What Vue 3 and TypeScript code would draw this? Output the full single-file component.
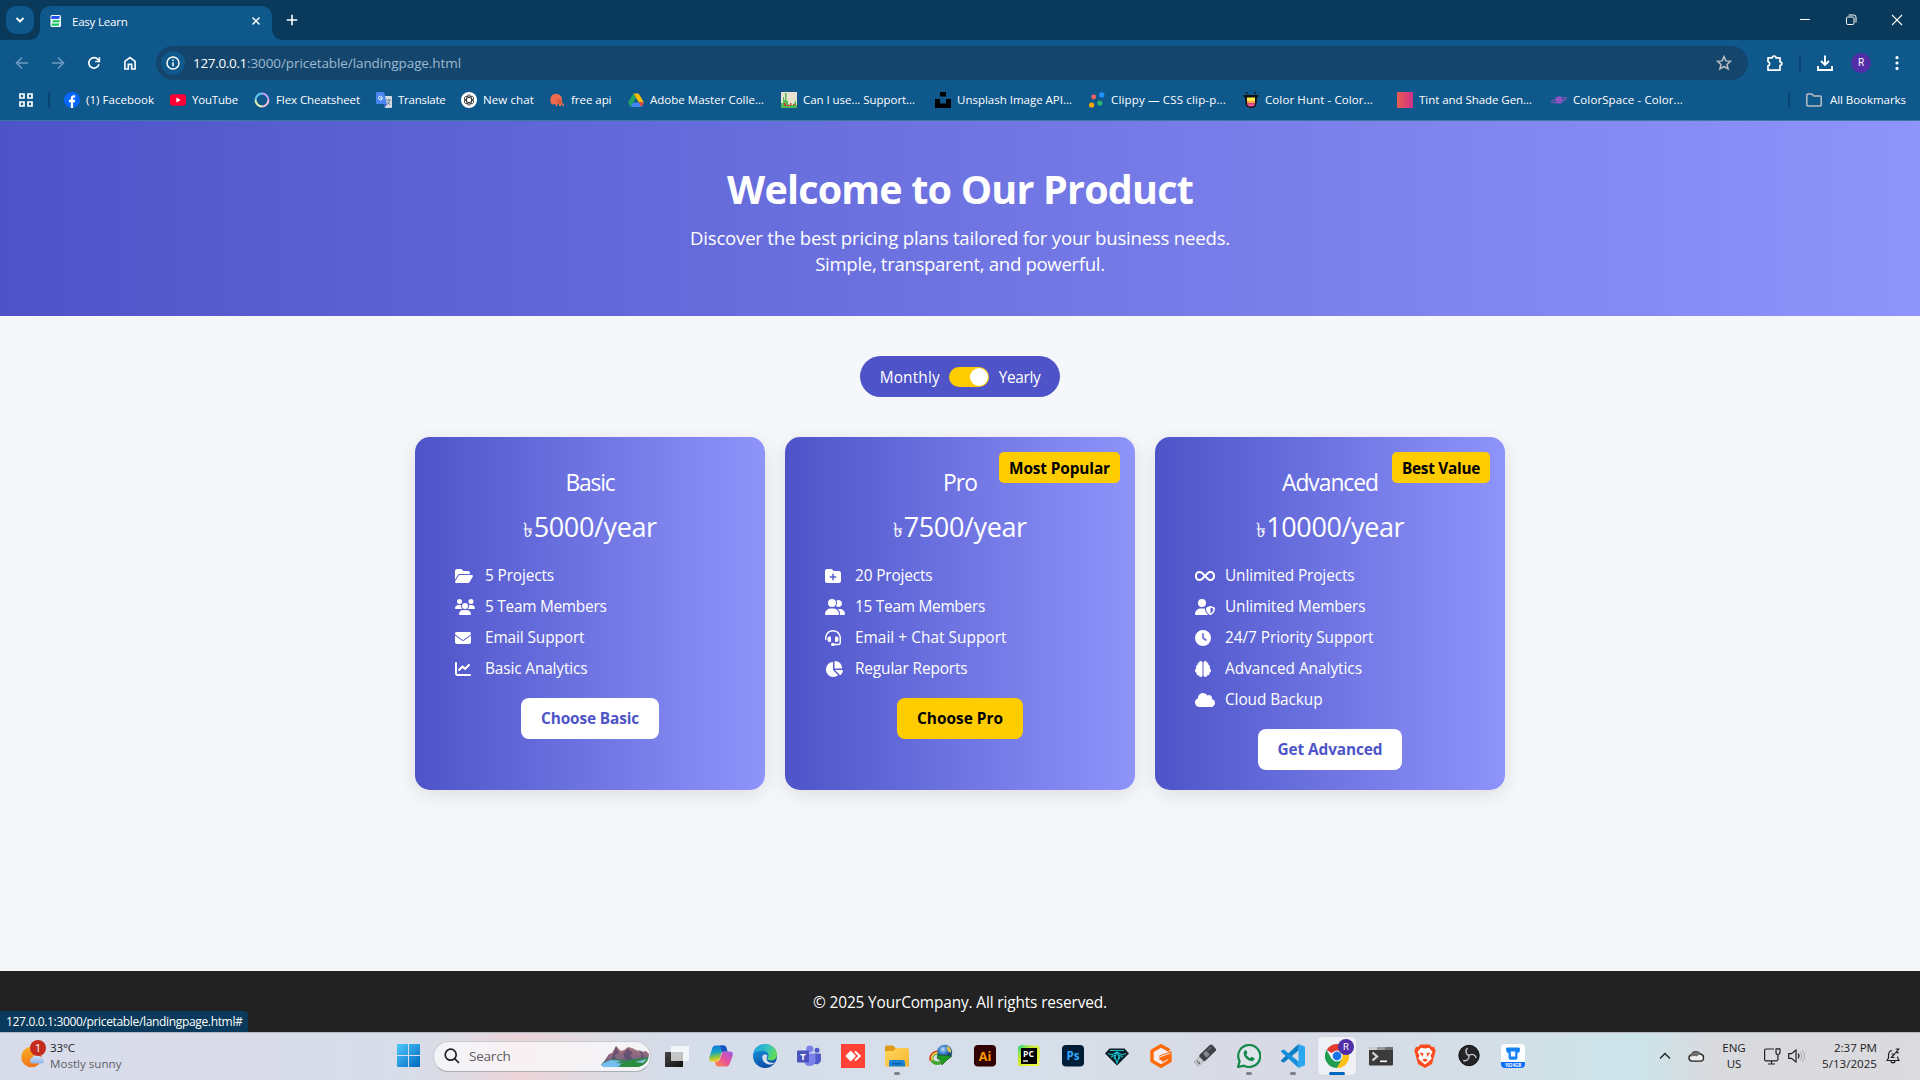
<script setup lang="ts">
import { ref } from 'vue'

interface Bookmark { label: string; icon: string; slot: number; text: number }
interface Feature { icon: string; label: string; width: number }
interface Plan {
  name: string
  nameWidth: number
  price: string
  priceWidth: number
  badge?: string
  badgeWidth?: number
  features: Feature[]
  action: string
  actionWidth: number
  buttonWidth: number
  accent?: boolean
}

const bookmarks: Bookmark[] = [
  { label: '(1) Facebook', icon: 'facebook', slot: 106, text: 68 },
  { label: 'YouTube', icon: 'youtube', slot: 84, text: 46 },
  { label: 'Flex Cheatsheet', icon: 'ring', slot: 122, text: 84 },
  { label: 'Translate', icon: 'translate', slot: 85, text: 47.5 },
  { label: 'New chat', icon: 'chat', slot: 88, text: 51 },
  { label: 'free api', icon: 'api', slot: 79, text: 40.5 },
  { label: 'Adobe Master Colle...', icon: 'drive', slot: 153, text: 114 },
  { label: 'Can I use... Support...', icon: 'caniuse', slot: 154, text: 112 },
  { label: 'Unsplash Image API...', icon: 'unsplash', slot: 154, text: 115 },
  { label: 'Clippy — CSS clip-p...', icon: 'clippy', slot: 154, text: 115 },
  { label: 'Color Hunt - Color...', icon: 'hunt', slot: 154, text: 108 },
  { label: 'Tint and Shade Gen...', icon: 'tint', slot: 154, text: 113 },
  { label: 'ColorSpace - Color...', icon: 'space', slot: 154, text: 110 },
]

const glyphs: Record<string, { w: number; d: string }> = {
  folderOpen: { w: 576, d: 'M88.7 223.8L0 375.8V96C0 60.7 28.7 32 64 32H181.5c17 0 33.3 6.7 45.3 18.7l26.5 26.5c12 12 28.3 18.7 45.3 18.7H416c35.3 0 64 28.7 64 64v32H144c-22.8 0-43.8 12.1-55.3 31.8zm27.6 16.1C122.1 230 132.6 224 144 224H544c11.5 0 22 6.1 27.7 16.1s5.7 22.2-.1 32.1l-112 192C453.9 474 443.4 480 432 480H32c-11.5 0-22-6.1-27.7-16.1s-5.7-22.2 .1-32.1l112-192z' },
  users: { w: 640, d: 'M144 0a80 80 0 1 1 0 160A80 80 0 1 1 144 0zM512 0a80 80 0 1 1 0 160A80 80 0 1 1 512 0zM0 298.7C0 239.8 47.8 192 106.7 192h42.7c15.9 0 31 3.5 44.6 9.7c-1.3 7.2-1.9 14.7-1.9 22.3c0 38.2 16.8 72.5 43.3 96c-.2 0-.4 0-.7 0H21.3C9.6 320 0 310.4 0 298.7zM405.3 320c-.2 0-.4 0-.7 0c26.6-23.5 43.3-57.8 43.3-96c0-7.6-.7-15-1.9-22.3c13.6-6.3 28.7-9.7 44.6-9.7h42.7C592.2 192 640 239.8 640 298.7c0 11.8-9.6 21.3-21.3 21.3H405.3zM224 224a96 96 0 1 1 192 0 96 96 0 1 1 -192 0zM128 485.3C128 411.7 187.7 352 261.3 352H378.7C452.3 352 512 411.7 512 485.3c0 14.7-11.9 26.7-26.7 26.7H154.7c-14.7 0-26.7-11.9-26.7-26.7z' },
  envelope: { w: 512, d: 'M48 64C21.5 64 0 85.5 0 112c0 15.1 7.1 29.3 19.2 38.4L236.8 313.6c11.4 8.5 27 8.5 38.4 0L492.8 150.4c12.1-9.1 19.2-23.3 19.2-38.4c0-26.5-21.5-48-48-48H48zM0 176V384c0 35.3 28.7 64 64 64H448c35.3 0 64-28.7 64-64V176L294.4 339.2c-22.8 17.1-54 17.1-76.8 0L0 176z' },
  chartLine: { w: 512, d: 'M64 64c0-17.7-14.3-32-32-32S0 46.3 0 64V400c0 44.2 35.8 80 80 80H480c17.7 0 32-14.3 32-32s-14.3-32-32-32H80c-8.8 0-16-7.2-16-16V64zm406.6 86.6c12.5-12.5 12.5-32.8 0-45.3s-32.8-12.5-45.3 0L320 210.7l-57.4-57.4c-12.5-12.5-32.8-12.5-45.3 0l-112 112c-12.5 12.5-12.5 32.8 0 45.3s32.8 12.5 45.3 0L240 221.3l57.4 57.4c12.5 12.5 32.8 12.5 45.3 0l128-128z' },
  folderPlus: { w: 512, d: 'M512 416c0 35.3-28.7 64-64 64H64c-35.3 0-64-28.7-64-64V96C0 60.7 28.7 32 64 32H192c20.1 0 39.1 9.5 51.2 25.6l19.2 25.6c6 8.1 15.5 12.8 25.6 12.8H448c35.3 0 64 28.7 64 64V416zM232 376c0 13.3 10.7 24 24 24s24-10.7 24-24V312h64c13.3 0 24-10.7 24-24s-10.7-24-24-24H280V200c0-13.3-10.7-24-24-24s-24 10.7-24 24v64H168c-13.3 0-24 10.7-24 24s10.7 24 24 24h64v64z' },
  userGroup: { w: 640, d: 'M96 128a128 128 0 1 1 256 0A128 128 0 1 1 96 128zM0 482.3C0 383.8 79.8 304 178.3 304h91.4C368.2 304 448 383.8 448 482.3c0 16.4-13.3 29.7-29.7 29.7H29.7C13.3 512 0 498.7 0 482.3zM609.3 512H471.4c5.4-9.4 8.6-20.3 8.6-32v-8c0-60.7-27.1-115.2-69.8-151.8c2.4-.1 4.7-.2 7.1-.2h61.4C567.8 320 640 392.2 640 481.3c0 17-13.8 30.7-30.7 30.7zM432 256c-31 0-59-12.6-79.3-32.9C372.4 196.5 384 163.6 384 128c0-26.8-6.6-52.1-18.3-74.3C384.3 40.1 407.2 32 432 32c61.9 0 112 50.1 112 112s-50.1 112-112 112z' },
  headset: { w: 512, d: 'M256 48C141.1 48 48 141.1 48 256v40c0 13.3-10.7 24-24 24s-24-10.7-24-24V256C0 114.6 114.6 0 256 0S512 114.6 512 256V400.1c0 48.6-39.4 88-88.1 88L313.6 488c-8.3 14.3-23.8 24-41.6 24H240c-26.5 0-48-21.5-48-48s21.5-48 48-48h32c17.8 0 33.3 9.7 41.6 24l110.4 .1c22.1 0 40-17.9 40-40V256c0-114.9-93.1-208-208-208zM144 208h16c17.7 0 32 14.3 32 32V352c0 17.7-14.3 32-32 32H144c-35.3 0-64-28.7-64-64V272c0-35.3 28.7-64 64-64zm224 0c35.3 0 64 28.7 64 64v48c0 35.3-28.7 64-64 64H352c-17.7 0-32-14.3-32-32V240c0-17.7 14.3-32 32-32h16z' },
  chartPie: { w: 576, d: 'M304 240V16.6c0-9 7-16.6 16-16.6C443.7 0 544 100.3 544 224c0 9-7.6 16-16.6 16H304zM32 272C32 150.7 122.1 50.3 239 34.3c9.2-1.3 17 6.1 17 15.4V288L412.5 444.5c6.7 6.7 6.2 17.7-1.5 23.1C371.8 495.6 323.8 512 272 512C139.5 512 32 404.6 32 272zm526.4 16c9.3 0 16.6 7.8 15.4 17c-7.7 55.9-34.6 105.6-73.9 142.3c-6 5.6-15.4 5.2-21.2-.7L320 288H558.4z' },
  infinity: { w: 640, d: 'M0 241.1C0 161 65 96 145.1 96c38.5 0 75.4 15.3 102.6 42.5L320 210.7l72.2-72.2C419.5 111.3 456.4 96 494.9 96C575 96 640 161 640 241.1v29.7C640 351 575 416 494.9 416c-38.5 0-75.4-15.3-102.6-42.5L320 301.3l-72.2 72.2C220.5 400.7 183.6 416 145.1 416C65 416 0 351 0 270.9V241.1zM274.7 256l-72.2-72.2c-15.2-15.2-35.9-23.8-57.4-23.8C100.3 160 64 196.3 64 241.1v29.7c0 44.8 36.3 81.1 81.1 81.1c21.5 0 42.2-8.5 57.4-23.8L274.7 256zm90.5 0l72.2 72.2c15.2 15.2 35.9 23.8 57.4 23.8c44.8 0 81.1-36.3 81.1-81.1V241.1c0-44.8-36.3-81.1-81.1-81.1c-21.5 0-42.2 8.5-57.4 23.8L365.3 256z' },
  userShield: { w: 640, d: 'M224 256A128 128 0 1 0 224 0a128 128 0 1 0 0 256zm-45.7 48C79.8 304 0 383.8 0 482.3C0 498.7 13.3 512 29.7 512H418.3c1.8 0 3.5-.2 5.3-.5c-76.3-55.1-99.8-141-103.1-200.2c-16.1-4.8-33.1-7.3-50.7-7.3H178.3zm308.8-78.3l-120 48C358 277.4 352 286.2 352 296c0 63.3 25.9 168.8 134.8 214.2c5.9 2.5 12.6 2.5 18.5 0C614.1 464.8 640 359.3 640 296c0-9.8-6-18.6-15.1-22.3l-120-48c-5.7-2.3-12.1-2.3-17.8 0zM591.4 312c-3.9 50.7-27.2 116.7-95.4 149.7V273.8L591.4 312z' },
  clock: { w: 512, d: 'M256 0a256 256 0 1 1 0 512A256 256 0 1 1 256 0zM232 120V256c0 8 4 15.5 10.7 20l96 64c11 7.4 25.9 4.4 33.3-6.7s4.4-25.9-6.7-33.3L280 243.2V120c0-13.3-10.7-24-24-24s-24 10.7-24 24z' },
  brain: { w: 512, d: 'M184 0c30.9 0 56 25.1 56 56V456c0 30.9-25.1 56-56 56c-28.9 0-52.7-21.9-55.7-50.1c-5.2 1.4-10.7 2.1-16.3 2.1c-35.3 0-64-28.7-64-64c0-7.4 1.3-14.6 3.6-21.2C21.4 367.4 0 338.2 0 304c0-31.9 18.7-59.5 45.8-72.3C37.1 220.8 32 207 32 192c0-30.7 21.6-56.3 50.4-62.6C80.8 123.9 80 118 80 112c0-29.9 20.6-55.1 48.3-62.1C131.3 21.9 155.1 0 184 0zM328 0c28.9 0 52.6 21.9 55.7 49.9c27.8 7 48.3 32.1 48.3 62.1c0 6-.8 11.9-2.4 17.4c28.8 6.2 50.4 31.9 50.4 62.6c0 15-5.1 28.8-13.8 39.7C493.3 244.5 512 272.1 512 304c0 34.2-21.4 63.4-51.6 74.8c2.3 6.6 3.6 13.8 3.6 21.2c0 35.3-28.7 64-64 64c-5.6 0-11.1-.7-16.3-2.1c-3 28.2-26.8 50.1-55.7 50.1c-30.9 0-56-25.1-56-56V56c0-30.9 25.1-56 56-56z' },
  cloud: { w: 640, d: 'M0 336c0 79.5 64.5 144 144 144H512c70.7 0 128-57.3 128-128c0-61.9-44-113.6-102.4-125.4c4.1-10.7 6.4-22.4 6.4-34.6c0-53-43-96-96-96c-19.7 0-38.1 6-53.3 16.2C367 64.2 315.3 32 256 32C167.6 32 96 103.6 96 192c0 2.7 .1 5.4 .2 8.1C40.2 219.8 0 273.2 0 336z' },
}

const plans: Plan[] = [
  {
    name: 'Basic', nameWidth: 49, price: '5000/year', priceWidth: 123,
    features: [
      { icon: 'folderOpen', label: '5 Projects', width: 69 },
      { icon: 'users', label: '5 Team Members', width: 121.5 },
      { icon: 'envelope', label: 'Email Support', width: 99.5 },
      { icon: 'chartLine', label: 'Basic Analytics', width: 102.5 },
    ],
    action: 'Choose Basic', actionWidth: 98, buttonWidth: 138,
  },
  {
    name: 'Pro', nameWidth: 34, price: '7500/year', priceWidth: 123,
    badge: 'Most Popular', badgeWidth: 101,
    features: [
      { icon: 'folderPlus', label: '20 Projects', width: 77.5 },
      { icon: 'userGroup', label: '15 Team Members', width: 130 },
      { icon: 'headset', label: 'Email + Chat Support', width: 151.5 },
      { icon: 'chartPie', label: 'Regular Reports', width: 112.5 },
    ],
    action: 'Choose Pro', actionWidth: 86, buttonWidth: 126, accent: true,
  },
  {
    name: 'Advanced', nameWidth: 96, price: '10000/year', priceWidth: 138,
    badge: 'Best Value', badgeWidth: 78,
    features: [
      { icon: 'infinity', label: 'Unlimited Projects', width: 129.5 },
      { icon: 'userShield', label: 'Unlimited Members', width: 140.5 },
      { icon: 'clock', label: '24/7 Priority Support', width: 148.5 },
      { icon: 'brain', label: 'Advanced Analytics', width: 137 },
      { icon: 'cloud', label: 'Cloud Backup', width: 97.5 },
    ],
    action: 'Get Advanced', actionWidth: 105, buttonWidth: 144,
  },
]

const yearly = ref(true)

// Tracks a text run so that it takes exactly the given width.
const vFit = {
  mounted(el: HTMLElement, binding: { value: number }) {
    const count = (el.textContent ?? '').trim().length
    const natural = el.getBoundingClientRect().width
    if (count > 0) el.style.letterSpacing = `${(binding.value - natural) / count}px`
  },
}
</script>

<template>
  <div class="screen">
    <header class="browser">
      <div class="tabstrip">
        <button class="tab-search" aria-label="Search tabs">
          <svg width="10" height="10" viewBox="0 0 10 10" fill="none" stroke="#fff" stroke-width="1.8"><path d="M1.5 3L5 6.5 8.5 3" /></svg>
        </button>
        <div class="tab">
          <svg class="favicon" width="12" height="12" viewBox="0 0 12 12">
            <rect x=".5" width="10.5" height="12" rx="1.5" fill="#f4fbff" />
            <path d="M1.500 1h8.500l-.8 3H1.200z" fill="#2b50f0" />
            <path d="M3 5.200h7l-.8 2H2z" fill="#0fc45c" />
            <path d="M2 8.500h7.500l-.8 2.300H1.500z" fill="#0fc45c" />
          </svg>
          <span v-fit="55.500" class="fit">Easy Learn</span>
          <svg class="tab-close" width="10" height="10" viewBox="0 0 10 10" stroke="#fff" stroke-width="1.5"><path d="M1.500 1.500l7 7M8.500 1.500l-7 7" /></svg>
        </div>
        <svg class="new-tab" width="12" height="12" viewBox="0 0 12 12" stroke="#fff" stroke-width="1.600"><path d="M6 .8v10.400M.8 6h10.400" /></svg>
        <div class="window-buttons">
          <svg width="12" height="12" viewBox="0 0 12 12" stroke="#fff"><path d="M1 5.500h10" /></svg>
          <svg width="12" height="12" viewBox="0 0 12 12" fill="none" stroke="#fff"><rect x="1.500" y="3" width="7.500" height="7.500" rx="1.200" /><path d="M3.500 1h5.200A2.300 2.300 0 0 1 11 3.300v5.200" /></svg>
          <svg width="12" height="12" viewBox="0 0 12 12" stroke="#fff" stroke-width="1.100"><path d="M1 1l10 10M11 1L1 11" /></svg>
        </div>
      </div>

      <div class="toolbar">
        <div class="nav-buttons">
          <svg width="14" height="14" viewBox="0 0 14 14" fill="none" stroke="#6f9cc0" stroke-width="1.6"><path d="M13 7H2M7 1.5L1.5 7 7 12.5" /></svg>
          <svg width="14" height="14" viewBox="0 0 14 14" fill="none" stroke="#6f9cc0" stroke-width="1.6"><path d="M1 7h11M7 1.5L12.5 7 7 12.5" /></svg>
          <svg width="14" height="14" viewBox="0 0 14 14" fill="none" stroke="#fff" stroke-width="1.6"><path d="M12 8.3A5.2 5.2 0 1 1 10.9 3.4L12.3 5" /><path d="M12.400 1.200v4.300H8.200" /></svg>
          <svg width="14" height="14" viewBox="0 0 14 14" fill="none" stroke="#fff" stroke-width="1.6"><path d="M1.9 13V5.400L7 1.500l5.100 3.900V13H8.700V8.400H5.300V13z" /></svg>
        </div>
        <div class="omnibox">
          <span class="site-info">
            <svg width="14" height="14" viewBox="0 0 14 14" fill="none" stroke="#fff" stroke-width="1.5"><circle cx="7" cy="7" r="6" /><path d="M7 6.200v4M7 3.500v1.500" /></svg>
          </span>
          <span v-fit="54" class="fit host">127.0.0.1</span><span v-fit="214" class="fit path">:3000/pricetable/landingpage.html</span>
          <svg class="star" width="16" height="16" viewBox="0 0 16 16" fill="none" stroke="#b9bcc0" stroke-width="1.5"><path d="M8 1.600l1.900 4.300 4.600.4-3.500 3.100 1.100 4.600L8 11.500 3.900 14 5 9.400 1.500 6.300l4.600-.4z" /></svg>
        </div>
        <svg class="puzzle" width="18" height="18" viewBox="0 0 18 18" fill="none" stroke="#fff" stroke-width="1.700" stroke-linejoin="round"><path d="M2 3.800h4.300a1.800 1.800 0 0 1 3.600 0H14v4a1.800 1.800 0 0 1 0 3.600v4.800H2v-4.300a2.200 2.200 0 0 0 0-4.300z" /></svg>
        <i class="divider"></i>
        <svg class="download" width="16" height="16" viewBox="0 0 16 16" fill="none" stroke="#fff" stroke-width="1.900"><path d="M8 .5v9M4 6l4 4 4-4M1 11v4h14v-4" /></svg>
        <span class="avatar">R</span>
        <svg width="4" height="16" viewBox="0 0 4 16" fill="#fff"><circle cx="2" cy="2.600" r="1.600" /><circle cx="2" cy="8" r="1.600" /><circle cx="2" cy="13.400" r="1.600" /></svg>
      </div>

      <div class="bookmarks">
        <svg width="14" height="14" viewBox="0 0 14 14" fill="none" stroke="#fff" stroke-width="1.700"><path d="M1 1h4v4H1zM9 1h4v4H9zM1 9h4v4H1zM9 9h4v4H9z" /></svg>
        <i class="divider first"></i>
        <div v-for="b in bookmarks" :key="b.label" class="bookmark" :style="{ width: b.slot + 'px' }">
          <svg width="16" height="16" viewBox="0 0 16 16">
            <g v-if="b.icon === 'facebook'"><circle cx="8" cy="8" r="8" fill="#0866ff" /><path d="M6.800 16V10.200H4.900V7.800h1.900V6.400c0-2.200 1.100-3.200 2.900-3.200.7 0 1.200.1 1.500.2v2h-.9c-1 0-1.200.4-1.200 1.200v1.200h2.100l-.4 2.400H9.100V16z" fill="#fff" /></g>
            <g v-else-if="b.icon === 'youtube'"><rect y="2.300" width="16" height="11.400" rx="2.600" fill="#ff0033" /><path d="M6.400 5.600v4.800L10.600 8z" fill="#fff" /></g>
            <g v-else-if="b.icon === 'ring'" fill="none" stroke-width="2"><path d="M1.600 8A6.400 6.400 0 0 1 8 1.600" stroke="#64c9f1" /><path d="M8 1.600A6.400 6.400 0 0 1 14.400 8" stroke="#c29bf3" /><path d="M14.400 8A6.400 6.400 0 0 1 8 14.400" stroke="#f0bde0" /><path d="M8 14.400A6.400 6.400 0 0 1 1.600 8" stroke="#e9efb5" /></g>
            <g v-else-if="b.icon === 'translate'"><path d="M6 4h9a1 1 0 0 1 1 1v10a1 1 0 0 1-1 1H9z" fill="#d5dae2" /><path d="M1 0h7l3 12H1a1 1 0 0 1-1-1V1a1 1 0 0 1 1-1z" fill="#4a86f0" /><path d="M7.200 5.900H5v1.100h1.100A1.900 1.900 0 1 1 5.700 4.600" stroke="#fff" stroke-width=".9" fill="none" /><path d="M10.300 8h4.500M12.500 7v1M11 12.500c1.700-1 2.500-2.500 2.700-4.500M11.500 9.500l2.500 3.500" stroke="#68778a" stroke-width=".9" fill="none" /><path d="M8.500 16l2.500-4H8z" fill="#3056c8" /></g>
            <g v-else-if="b.icon === 'chat'"><circle cx="8" cy="8" r="8" fill="#fff" /><g fill="none" stroke="#222" stroke-width=".8"><ellipse cx="8" cy="8" rx="2.500" ry="5.200" /><ellipse cx="8" cy="8" rx="2.500" ry="5.200" transform="rotate(60 8 8)" /><ellipse cx="8" cy="8" rx="2.500" ry="5.200" transform="rotate(120 8 8)" /></g></g>
            <g v-else-if="b.icon === 'api'" fill="#ee6c4d"><path d="M1.800 11C.3 6 2.500 1.800 7 1.800S14 6 13 11l2 1v2h-1.500v-1.500H12V14h-2v-2H8.500v2h-2v-2H5l-1.500.8z" /><path d="M8 7h4.500v5H8z" fill="#c94c35" opacity=".5" /></g>
            <g v-else-if="b.icon === 'drive'"><path d="M5.400 1.500h5.200L16 10.500h-5.200z" fill="#fbbc04" /><path d="M5.400 1.500L8 6 2.600 15 0 10.500z" fill="#1ea362" /><path d="M5.300 10.500H16L13.400 15H2.600z" fill="#4285f4" /><path d="M10.800 10.500H16L13.400 15z" fill="#ea4335" /></g>
            <g v-else-if="b.icon === 'caniuse'"><rect width="16" height="16" fill="#e9e1cf" /><path d="M0 16v-5h2V5h1v3h1V1h1.500v8H7v3h1v1h5v-2h1v-2h1v4h1v3z" fill="#52b755" /><path d="M3 11h2v2h5v1H3zM9 11h1.500v2H9zM12 12h3v1h-3z" fill="#c8503e" /></g>
            <path v-else-if="b.icon === 'unsplash'" d="M5 0h6v4.500H5zM0 7h5v4.500h6V7h5v9H0z" fill="#000" />
            <g v-else-if="b.icon === 'clippy'"><circle cx="4.700" cy="5" r="2.400" fill="#f5625d" /><circle cx="12.800" cy="2.900" r="2.600" fill="#1e90ff" /><circle cx="2.600" cy="13" r="2.600" fill="#ffa502" /><circle cx="10.800" cy="11" r="2.600" fill="#2fb573" /></g>
            <g v-else-if="b.icon === 'hunt'"><path d="M0 3.800l2-.8h12l2 .8-2 2H2z" fill="#111" /><path d="M2.300 4h11.400v6.500a5.700 5.500 0 0 1-11.400 0z" fill="#111" /><path d="M4 5.500h8v3.500H4z" fill="#fff04d" /><path d="M4 8.800h8v2.400H4z" fill="#ffa64d" /><path d="M4 11.200h8a4 3.400 0 0 1-8 0z" fill="#f0529c" /><path d="M3 .3l1.500 1M13 .3l-1.500 1" stroke="#111" stroke-width="1.400" /></g>
            <g v-else-if="b.icon === 'tint'"><defs><linearGradient id="tint"><stop stop-color="#e85d4e" /><stop offset="1" stop-color="#d1308a" /></linearGradient></defs><rect width="16" height="16" fill="url(#tint)" /></g>
            <g v-else><circle cx="8" cy="8" r="3.700" fill="#8d55c7" /><path d="M4.500 7.500C2 8 .5 9 .7 9.900c.3 1.200 5 .9 9-.3S16 6.600 15.300 6c-.4-.5-1.800-.6-3.500-.3" fill="none" stroke="#8058b8" stroke-width="1.200" /></g>
          </svg>
          <span v-fit="b.text" class="fit">{{ b.label }}</span>
        </div>
        <div class="all-bookmarks">
          <i class="divider"></i>
          <svg width="16" height="14" viewBox="0 0 16 14" fill="none" stroke="#b9bcc0" stroke-width="1.500"><path d="M.8 12V2a1 1 0 0 1 1-1h4l2 2h6.400a1 1 0 0 1 1 1v8a1 1 0 0 1-1 1H1.800a1 1 0 0 1-1-1z" /></svg>
          <span v-fit="76" class="fit">All Bookmarks</span>
        </div>
      </div>
    </header>

    <section class="hero">
      <h1><span v-fit="466" class="fit">Welcome to Our Product</span></h1>
      <p><span v-fit="540" class="fit">Discover the best pricing plans tailored for your business needs.</span></p>
      <p><span v-fit="289.500" class="fit">Simple, transparent, and powerful.</span></p>
    </section>

    <main class="pricing">
      <div class="billing">
        <span v-fit="60" class="fit">Monthly</span>
        <button class="switch" :class="{ on: yearly }" aria-label="Billing period" @click="yearly = !yearly"><i></i></button>
        <span v-fit="41.500" class="fit">Yearly</span>
      </div>

      <div class="plans">
        <article v-for="plan in plans" :key="plan.name" class="plan">
          <span v-if="plan.badge" class="badge"><span v-fit="plan.badgeWidth" class="fit">{{ plan.badge }}</span></span>
          <h2><span v-fit="plan.nameWidth" class="fit">{{ plan.name }}</span></h2>
          <p class="price"><span class="taka">৳</span><span v-fit="plan.priceWidth" class="fit">{{ plan.price }}</span></p>
          <ul>
            <li v-for="f in plan.features" :key="f.label">
              <span class="mark"><svg :width="glyphs[f.icon].w / 32" height="16" :viewBox="`0 0 ${glyphs[f.icon].w} 512`" fill="#fff"><path :d="glyphs[f.icon].d" /></svg></span>
              <span v-fit="f.width" class="fit">{{ f.label }}</span>
            </li>
          </ul>
          <a class="action" :class="{ accent: plan.accent }" :style="{ width: plan.buttonWidth + 'px' }"><span v-fit="plan.actionWidth" class="fit">{{ plan.action }}</span></a>
        </article>
      </div>
    </main>

    <footer class="footer">
      <span v-fit="294" class="fit">© 2025 YourCompany. All rights reserved.</span>
      <span class="status"><span v-fit="236.500" class="fit">127.0.0.1:3000/pricetable/landingpage.html#</span></span>
    </footer>

    <div class="taskbar">
      <div class="weather">
        <svg width="26" height="28" viewBox="0 0 26 28">
          <defs>
            <linearGradient id="sun" x1="0" y1="0" x2=".3" y2="1"><stop stop-color="#f7b62a" /><stop offset="1" stop-color="#f07414" /></linearGradient>
            <linearGradient id="puff" x1="0" y1="0" x2="0" y2="1"><stop stop-color="#d9e8fb" /><stop offset="1" stop-color="#8fb4ee" /></linearGradient>
          </defs>
          <circle cx="10.500" cy="17" r="10.300" fill="url(#sun)" />
          <path d="M11 23.500a3 3 0 0 1 .3-5.800 4.500 4.500 0 0 1 8-1 3 3 0 0 1 3 3.800 2 2 0 0 1-1 3z" fill="url(#puff)" />
          <circle cx="17" cy="8" r="8" fill="#c42b1c" />
          <text x="17" y="12.200" text-anchor="middle" font-size="11.500" fill="#fff">1</text>
        </svg>
        <div class="weather-text"><span v-fit="25" class="fit">33°C</span><span v-fit="71.500" class="fit muted">Mostly sunny</span></div>
      </div>

      <svg class="start" width="24" height="24" viewBox="0 0 24 24">
        <defs><linearGradient id="win" x1="0" y1="0" x2="1" y2="1"><stop stop-color="#4cc9fa" /><stop offset="1" stop-color="#0067c0" /></linearGradient></defs>
        <path d="M1 0h10v11H0V1a1 1 0 0 1 1-1zM12 0h10a1 1 0 0 1 1 1v10H12zM0 12h11v11H1a1 1 0 0 1-1-1zM12 12h11v10a1 1 0 0 1-1 1H12z" fill="url(#win)" />
      </svg>

      <div class="search">
        <svg width="16" height="16" viewBox="0 0 16 16" fill="none" stroke="#222" stroke-width="1.700"><circle cx="6.700" cy="6.700" r="5.500" /><path d="M10.700 10.700l4.300 4.300" /></svg>
        <span v-fit="41.500" class="fit">Search</span>
        <svg class="scene" width="48" height="22" viewBox="0 0 48 22">
          <defs><clipPath id="sceneclip"><path d="M0 20C5 12 10 4 16 0h32v9a13 13 0 0 1-12 13H3z" /></clipPath><linearGradient id="hill" x1="0" y1="0" x2="0" y2="1"><stop stop-color="#b47878" /><stop offset="1" stop-color="#655b85" /></linearGradient></defs>
          <g clip-path="url(#sceneclip)">
            <path d="M2 18L8 9l3-1 4-7 5 5 3-1 4-3 4 1 4 2 5 2 5-1 5 5v9H0z" fill="url(#hill)" />
            <path d="M15 1l3 7-4 2 1 6-6 2zM27 3l5 5-3 3 4 4h-8l-3-6zM37 5l4 5-2 5h5l-3-9z" fill="#4d456f" opacity=".65" />
            <path d="M0 18l12-4 14 1 22-3v10H0z" fill="#38835a" />
            <path d="M0 19l10-4 10 1-5 2 11 1-10 3H0z" fill="#76bdf0" />
            <path d="M20 19l12-4 16-1v8H18z" fill="#2b8c3c" />
            <path d="M34 17l12-3-4 4z" fill="#8ac3e8" />
          </g>
        </svg>
      </div>

      <div class="apps">
        <div class="app"><svg width="24" height="24" viewBox="0 0 24 24"><defs><linearGradient id="tv" x1="0" y1="0" x2="1" y2="1"><stop stop-color="#454545" /><stop offset="1" stop-color="#111" /></linearGradient></defs><rect y="8" width="18" height="15" rx=".5" fill="url(#tv)" /><rect x="6" y="2" width="18" height="15" rx=".5" fill="#fff" opacity=".72" /></svg></div>

        <div class="app"><svg width="24" height="24" viewBox="0 0 24 24"><defs>
          <linearGradient id="cp1" x1="0" y1="0" x2=".2" y2="1"><stop stop-color="#1672d8" /><stop offset=".45" stop-color="#12a4c9" /><stop offset=".75" stop-color="#8cc63e" /><stop offset="1" stop-color="#ffce2e" /></linearGradient>
          <linearGradient id="cp2" x1="1" y1="0" x2="0" y2="1"><stop stop-color="#9b57e8" /><stop offset=".5" stop-color="#e8529a" /><stop offset="1" stop-color="#ff8b3d" /></linearGradient></defs>
          <path d="M6.500 1.500h8c2 0 2.600 1.200 3.100 3l.9 3h-3.300c-1.800 0-2.600 1-3.100 2.600l-1.800 5.400c-.5 1.600-1.300 2.200-2.800 2.200H3c-2.500 0-3.300-2-2.500-4.700L3 5c.7-2.300 1.600-3.500 3.500-3.500z" fill="url(#cp1)" />
          <path d="M11 1.500h3.500c2 0 2.600 1.200 3.100 3l.9 3h-3.300c-.8 0-1.500.3-2 .8z" fill="#1b4fc4" />
          <path d="M17.500 22.500h-8c-2 0-2.600-1.200-3.100-3l-.5-1.800h2c1.800 0 2.600-1 3.100-2.600l1.700-5.400c.5-1.600 1.400-2.200 2.900-2.200H21c2.500 0 3.300 2 2.500 4.700L21 19c-.7 2.300-1.600 3.500-3.500 3.500z" fill="url(#cp2)" /></svg></div>

        <div class="app"><svg width="24" height="24" viewBox="0 0 24 24"><defs>
          <linearGradient id="eg1" x1="0" y1="0" x2="1" y2=".3"><stop stop-color="#1b9de2" /><stop offset=".6" stop-color="#35c1c4" /><stop offset="1" stop-color="#5fdc5a" /></linearGradient>
          <linearGradient id="eg2" x1="0" y1="0" x2=".4" y2="1"><stop stop-color="#1aa2e8" /><stop offset="1" stop-color="#0b4da8" /></linearGradient></defs>
          <circle cx="12" cy="12" r="12" fill="url(#eg2)" />
          <path d="M.4 9.500C1.700 4 6.400 0 12 0c6.800 0 12 5 12 10.800 0 3.500-2.600 5.600-5.800 5.600-2.600 0-4-1-4-1.800s1.200-1.200 1.200-3.300C15.400 8.500 12.500 6.800 9 6.800 5 6.800 2 8 .4 9.500z" fill="url(#eg1)" />
          <path d="M9.300 12.500c-.5 5 4 8.600 8.500 8 1.800-.2 3.500-1.200 4.400-2.200-3.500 1.300-8.600.5-8.600-4 0-1.300.8-2 .8-3-2-1.300-4.900-.8-5.100 1.200z" fill="#d5dfec" /></svg></div>

        <div class="app"><svg width="24" height="24" viewBox="0 0 24 24"><circle cx="12.800" cy="5" r="3.600" fill="#7b83eb" /><circle cx="20" cy="6.200" r="2.500" fill="#5059c9" /><path d="M17 9.500h6a1 1 0 0 1 1 1V16a4.500 4.500 0 0 1-7 3.500z" fill="#5059c9" /><path d="M8 9.500h9.500a1 1 0 0 1 1 1V17a5.800 5.800 0 0 1-11.500 0v-6.500a1 1 0 0 1 1-1z" fill="#7b83eb" /><rect y="6.500" width="12" height="12" rx="1" fill="#4b53bc" /><text x="6" y="16" text-anchor="middle" font-size="9.500" font-weight="700" fill="#fff">T</text></svg></div>

        <div class="app"><svg width="24" height="24" viewBox="0 0 24 24"><rect width="24" height="24" fill="#ff4136" /><path d="M9.700 6.500l5.300 5.500-5.300 5.500L4.300 12z" fill="#fff" /><path d="M14 7.500l4.700 4.500-4.700 4.500" fill="none" stroke="#fff" stroke-width="2" /></svg></div>

        <div class="app open"><svg width="24" height="24" viewBox="0 0 24 24"><defs><linearGradient id="fld" x1="0" y1="0" x2="1" y2="1"><stop stop-color="#ffd75e" /><stop offset="1" stop-color="#f7b52e" /></linearGradient></defs><path d="M0 3a1.500 1.500 0 0 1 1.500-1.500H8l2.500 2.500H22v6H0z" fill="#dd9a16" /><path d="M0 7h8l3-3h11.500A1.500 1.500 0 0 1 24 5.500v16a1 1 0 0 1-1 1H1a1 1 0 0 1-1-1z" fill="url(#fld)" /><path d="M4 22.500V18a2 2 0 0 1 2-2h12a2 2 0 0 1 2 2v4.500z" fill="#1782d6" /><path d="M7 19h10v1.500H7z" fill="#0c5ba5" /></svg></div>

        <div class="app"><svg width="24" height="24" viewBox="0 0 24 24"><defs><radialGradient id="idm" cx=".4" cy=".3"><stop stop-color="#c5e0f8" /><stop offset=".5" stop-color="#4488d0" /><stop offset="1" stop-color="#174a88" /></radialGradient></defs><circle cx="15.500" cy="8.500" r="7.700" fill="url(#idm)" /><path d="M18 2c3 1 4.500 4 4 7-3-1-5-4-4-7z" fill="#d9c44c" /><path d="M8 7C2 8.500-.5 13 1.500 17s7 5 11 3l-1-3c-3 1-6 .5-7-1.500S5 11 9 10z" fill="#42a52c" /><path d="M1.500 17C0 13 2 8.500 8 7" fill="none" stroke="#e23f31" stroke-width="1.500" /><path d="M3.300 16.500C1.500 13 4 9.300 8.500 8.500" fill="none" stroke="#f3d73b" stroke-width="1.500" /><path d="M9 11l14 1-4 3-6 6-1-4-4-3z" fill="#1d9b20" stroke="#175016" stroke-width=".6" /></svg></div>

        <div class="app"><svg width="24" height="24" viewBox="0 0 24 24"><rect x="1" y="1" width="22" height="21.500" rx="4" fill="#330000" /><text x="12" y="16.500" text-anchor="middle" font-size="12.500" font-weight="700" fill="#ff9a00">Ai</text></svg></div>

        <div class="app"><svg width="24" height="24" viewBox="0 0 24 24"><defs><linearGradient id="pcg" x1="0" y1="0" x2="1" y2="1"><stop stop-color="#21d789" /><stop offset=".35" stop-color="#c5e72a" /><stop offset="1" stop-color="#fcf84a" /></linearGradient></defs><path d="M1 3l3-2 18 1 1 8-1 12H1z" fill="url(#pcg)" /><rect x="4" y="4" width="16" height="16" fill="#000" /><text x="11.500" y="12.500" text-anchor="middle" font-size="8.500" font-weight="700" fill="#fff">PC</text><path d="M6 17h5" stroke="#fff" stroke-width="1.300" /></svg></div>

        <div class="app"><svg width="24" height="24" viewBox="0 0 24 24"><rect x="1" y="1" width="22" height="21.500" rx="4" fill="#001e36" /><text x="12" y="16" text-anchor="middle" font-size="11.500" font-weight="700" fill="#31a8ff">Ps</text></svg></div>

        <div class="app"><svg width="24" height="24" viewBox="0 0 24 24"><path d="M4.500 4.500h15L24 9.500l-12 12-12-12z" fill="#0b1d24" /><path d="M5 6.500h14M3 9.500l4 1.500 5-3 5 3 4-1.500M6 13l3.500-1.500L12 19l2.500-7.500L18 13M9 15l3-7 3 7" fill="none" stroke="#19c0cf" stroke-width="1.100" /></svg></div>

        <div class="app"><svg width="24" height="24" viewBox="0 0 24 24"><path d="M12 2l9 5v10l-9 5-9-5V7z" fill="#f3eef0" /><path d="M20.500 6.500L12 1.800 3 7v10l9 5.200 9-5.200v-4.500l-8.500 4" fill="none" stroke="#ff6a0a" stroke-width="3.400" stroke-linejoin="round" /><path d="M10.500 11.500L22.500 7v5l-12 4.500z" fill="#ff6a0a" /><path d="M11 12.800l10-3.600" stroke="#f3eef0" stroke-width="1" /></svg></div>

        <div class="app"><svg width="24" height="24" viewBox="0 0 24 24"><g transform="rotate(-44 12 12) translate(1 1) scale(.92)"><rect x="7" y="7" width="19" height="9" rx="2" fill="#3d4146" /><rect x="12" y="8.500" width="5" height="6" rx="1" fill="#85898e" /><rect x="18" y="8.500" width="6" height="2.500" rx="1" fill="#5a5e63" /><rect x="-1" y="8.500" width="8" height="6.500" fill="#c9ccd0" stroke="#777" stroke-width=".5" /><path d="M1 10h2v1.200H1zM1 12.500h2v1.200H1z" fill="#444" /></g></svg></div>

        <div class="app open"><svg width="24" height="24" viewBox="0 0 24 24"><path d="M1 23l1.600-5.800A11 11 0 1 1 7 21.600z" fill="#e7edf3" fill-opacity=".5" stroke="#168a4c" stroke-width="2.200" stroke-linejoin="round" /><path d="M8.200 6.200c.5-.2 1 0 1.200.4l.9 2.100c.1.300 0 .6-.2.900l-.8 1c.8 1.600 2.100 2.800 3.900 3.600l1-1.100c.2-.3.500-.3.800-.2l2.200 1c.4.200.5.5.4.900-.3 1.500-1.800 2.500-3.300 2.300-4-.7-7.300-3.900-7.700-7.600-.1-1.400.6-2.700 1.600-3.300z" fill="#168a4c" /></svg></div>

        <div class="app open"><svg width="24" height="24" viewBox="0 0 24 24"><path d="M17.500 0L24 2.800v18.400L17.500 24z" fill="#2aa7ee" /><path d="M17.500 0v6.500L3 18.500l-1 .1L0 17V16.300z" fill="#0b7cc4" /><path d="M17.500 24v-6.500L3 5.500l-1-.1L0 7v.7z" fill="#1590dc" /></svg></div>

        <div class="app active"><svg width="24" height="24" viewBox="0 0 24 24"><path d="M12 12L1.600 6A12 12 0 0 1 22.400 6z" fill="#e33b2e" /><path d="M12 12l10.400-6A12 12 0 0 1 12 24z" fill="#fbc116" /><path d="M12 12L6.800 15 1.600 6A12 12 0 0 0 12 24l5.200-9z" fill="#209d4f" /><path d="M12 6.500h10.600A12 12 0 0 1 12 24l5-9z" fill="#fbc116" /><circle cx="12" cy="12" r="5.600" fill="#fff" /><circle cx="12" cy="12" r="4.400" fill="#1a73e8" /></svg><span class="profile">R</span></div>

        <div class="app"><svg width="24" height="24" viewBox="0 0 24 24"><rect y="3" width="24" height="18.500" rx="1.200" fill="#3b3b3b" /><path d="M0 4.200A1.200 1.200 0 0 1 1.200 3H8v3H0z" fill="#cfcfcf" /><path d="M8 3h8v3H8z" fill="#999" /><path d="M16 3h6.800A1.200 1.200 0 0 1 24 4.200V6h-8z" fill="#707070" /><path d="M3.500 8.500l4.500 4-4.500 4" fill="none" stroke="#d6d6d6" stroke-width="2.300" /><path d="M11 17.300h7" stroke="#fff" stroke-width="1.600" /></svg></div>

        <div class="app"><svg width="24" height="24" viewBox="0 0 24 24"><path d="M7.500.5h9L19 3l2-.3 1.700 4-1 3.300L19 20l-7 4-7-4L2.300 10l-1-3.300L3 2.700 5 3z" fill="#fb4a1c" /><path d="M12 4.500l4-.8 3.500 4.300-2 3.500 1.200 3-2.700 2.700-4 3.300-4-3.300L5.300 14.500l1.200-3-2-3.500L8 3.700z" fill="#fff" /><path d="M6.500 8.500l4 .7-.8 3.500zM17.500 8.500l-4 .7.8 3.500zM9 16l3-1.500 3 1.500-3 2z" fill="#fb4a1c" /></svg></div>

        <div class="app"><svg width="24" height="24" viewBox="0 0 24 24"><circle cx="12" cy="11.500" r="10.200" fill="#252427" stroke="#111" /><g fill="none" stroke="#c9c9cc" stroke-width="1.400"><path d="M12 11.500c-3.500-1.500-4-5-1.500-7.500" /><path d="M12 11.500c-3.500-1.500-4-5-1.500-7.500" transform="rotate(120 12 11.500)" /><path d="M12 11.500c-3.500-1.500-4-5-1.500-7.500" transform="rotate(240 12 11.500)" /></g></svg></div>

        <div class="app"><svg width="24" height="24" viewBox="0 0 24 24"><rect width="24" height="24" rx="4" fill="#fff" /><path d="M0 18h24v2a4 4 0 0 1-4 4H4a4 4 0 0 1-4-4z" fill="#0a6cf5" /><path d="M6.500 3.500h11a1.500 1.500 0 0 1 1.500 1.700l-.4 2.300a1.500 1.500 0 0 1-1.500 1.200H16.500v5a2 2 0 0 1-2 2h-5a2 2 0 0 1-2-2v-5H6.900a1.500 1.500 0 0 1-1.500-1.200L5 5.200a1.500 1.500 0 0 1 1.500-1.700z" fill="#1684f8" /><path d="M9.800 7.500h4.400v5H9.800z" fill="#fff" /><text x="12" y="22.800" text-anchor="middle" font-size="4.500" font-weight="700" fill="#fff">1024GB</text></svg></div>
      </div>

      <div class="tray">
        <svg class="chev" width="12" height="8" viewBox="0 0 12 8" fill="none" stroke="#222" stroke-width="1.400"><path d="M1 6.500l5-5 5 5" /></svg>
        <svg class="onedrive" width="17" height="12" viewBox="0 0 17 12"><path d="M4 11.200a3.300 3.300 0 0 1-.5-6.500A4.900 4.900 0 0 1 12.300 4a3.700 3.700 0 0 1 .7 7.200z" fill="#ececec" stroke="#222" stroke-width="1.300" /><path d="M1.500 7C2.300 4.800 4.500 1.600 7.800 1.400c2.500 0 4.200 1.500 4.700 3C10.500 4.700 9.500 5.500 8.500 6.500 6 5.800 4 6 1.500 7z" fill="#6f6f6f" /></svg>
        <div class="lang"><span v-fit="23.500" class="fit">ENG</span><span v-fit="14.500" class="fit">US</span></div>
        <svg class="net" width="17" height="17" viewBox="0 0 17 17" fill="none" stroke="#222" stroke-width="1.200"><path d="M10 1H2a1.400 1.400 0 0 0-1.400 1.400v9A1.400 1.400 0 0 0 2 12.800h10.500a1.400 1.400 0 0 0 1.400-1.400V8M4 16h7M7.500 13v3M12 1h4v3.500a2 2 0 0 1-4 0zM13 0v1M15 0v1M14 6.500V9" /></svg>
        <svg class="vol" width="17" height="14" viewBox="0 0 17 14" fill="none" stroke="#222" stroke-width="1.200"><path d="M.7 4.700h2.800L8 1v12L3.500 9.300H.7z" /><path d="M10 4.700a3.500 3.500 0 0 1 0 4.600" /><path d="M12 2.800a6 6 0 0 1 0 8.400M14 1a8.500 8.500 0 0 1 0 12" stroke="#aaa" stroke-width="1" /></svg>
        <div class="clock"><span v-fit="43" class="fit">2:37 PM</span><span v-fit="55" class="fit">5/13/2025</span></div>
        <svg class="bell" width="14" height="16" viewBox="0 0 14 16" fill="none" stroke="#222" stroke-width="1.200"><path d="M6 2.500C3.500 3 2.500 5 2.500 7v3L1 12.500h12L11.700 10V8.500M5 12.800a2 2 0 0 0 4 0M5.500 6h3L5.500 9.500h3M9.800 1h3l-3 3.600h3" /></svg>
      </div>
    </div>
  </div>
</template>

<style>
html, body { margin: 0; background: #f5f7fb; overflow: hidden; }
</style>

<style scoped>
* { box-sizing: border-box; }
.screen {
  width: 1920px; height: 1080px; display: flex; flex-direction: column; overflow: hidden;
  font-family: "Open Sans", "Noto Sans", sans-serif; background: #f5f7fb; color: #fff;
}
svg { display: block; flex: none; }
button { border: 0; padding: 0; font: inherit; }
.fit { display: inline-block; white-space: pre; }
i { display: block; }

.browser { height: 121px; background: #0f588c; border-bottom: 1px solid #3a7ca0; flex: none; font-size: 11.5px; }
.tabstrip { height: 40px; background: #0a3a5b; display: flex; align-items: center; padding: 0 17px 0 6px; }
.tab-search { width: 28px; height: 28px; border-radius: 10px; background: #0f588c; display: grid; place-items: center; }
.tab {
  width: 232px; height: 34px; margin: 6px 0 0 6px; padding: 0 11px 4px 10px; position: relative;
  background: #0f588c; border-radius: 10px 10px 0 0; display: flex; align-items: center; gap: 10px;
}
.tab::before, .tab::after { content: ""; position: absolute; bottom: 0; width: 10px; height: 10px; }
.tab::before { left: -10px; background: radial-gradient(circle at 0 0, transparent 9.5px, #0f588c 10px); }
.tab::after { right: -10px; background: radial-gradient(circle at 100% 0, transparent 9.5px, #0f588c 10px); }
.tab-close { margin-left: auto; }
.new-tab { margin-left: 14px; }
.window-buttons { margin-left: auto; display: flex; gap: 34px; }
.toolbar { height: 46px; display: flex; align-items: center; padding: 0 20px 0 15px; }
.nav-buttons { display: flex; gap: 22px; width: 141px; flex: none; }
.omnibox { width: 1592px; flex: none; height: 34px; border-radius: 17px; background: #14466d; display: flex; align-items: center; padding: 0 16px 0 5px; font-size: 13.5px; }
.site-info { width: 24px; height: 24px; border-radius: 12px; background: #0f588c; display: grid; place-items: center; margin-right: 8px; }
.path { color: #9dbad2; }
.star { margin-left: auto; }
.puzzle { margin-left: 18px; }
.divider { width: 2px; height: 16px; background: #0a4470; flex: none; }
.toolbar .divider { margin: 0 16px 0 15px; }
.avatar { width: 20px; height: 20px; border-radius: 50%; background: #512da8; margin: 0 24px 0 18px; font: 10px/20px Roboto, sans-serif; text-align: center; flex: none; }
.bookmarks { height: 29px; display: flex; align-items: center; padding: 0 14px 0 19px; margin-top: -1px; }
.divider.first { margin: 0 14px 0 15px; }
.bookmark { display: flex; align-items: center; gap: 6px; flex: none; line-height: 18px; }
.all-bookmarks { margin-left: auto; display: flex; align-items: center; }
.all-bookmarks svg { margin: 0 8px 0 16px; }

.hero { height: 195px; flex: none; background: linear-gradient(90deg, #4e54c8, #8f94fb); text-align: center; padding-top: 41px; }
.hero h1 { margin: 0 0 9px; font-size: 39.5px; line-height: 54px; font-weight: 700; }
.hero p { margin: 0; font-size: 18.6px; line-height: 26px; }

.pricing { flex: 1; padding-top: 40px; display: flex; flex-direction: column; align-items: center; }
.billing { width: 200px; height: 41px; border-radius: 20.5px; background: #4e54c8; display: flex; align-items: center; justify-content: center; gap: 9.5px; font-size: 15.4px; }
.billing .fit { padding-top: 2px; }
.switch { width: 40px; height: 20px; border-radius: 10px; background: #ffcc00; padding: 1px; }
.switch i { width: 18px; height: 18px; border-radius: 50%; background: #fff; }
.switch.on i { margin-left: 20px; }
.plans { display: flex; gap: 20px; margin-top: 40px; }
.plan {
  width: 350px; height: 353px; padding: 30px 40px 0; border-radius: 15px; position: relative;
  background: linear-gradient(90deg, #4e54c8, #8f94fb); box-shadow: 0 5px 20px rgba(0, 0, 0, .1);
  display: flex; flex-direction: column; align-items: center;
}
.badge { position: absolute; top: 15px; right: 15px; height: 31px; padding: 0 10px; border-radius: 5px; background: #ffcc00; color: #000; font-size: 15.4px; line-height: 33px; font-weight: 700; }
.plan h2 { margin: 0; font-size: 22.8px; line-height: 32px; font-weight: 400; }
.price { margin: 9px 0 0; height: 38px; font-size: 27px; line-height: 38px; display: flex; align-items: baseline; }
.taka { display: inline-block; width: 10.5px; font-size: 20px; line-height: 20px; }
ul { list-style: none; margin: 14px 0 14px; padding: 0; align-self: stretch; }
li { height: 31px; display: flex; align-items: center; font-size: 15.4px; line-height: 31px; }
.mark { width: 30px; }
.action { height: 41px; border-radius: 8px; background: #fff; color: #4e54c8; font-size: 15.4px; font-weight: 700; line-height: 42px; text-align: center; }
.action.accent { background: #ffcc00; color: #000; }

.footer { height: 61px; flex: none; background: #222; position: relative; text-align: center; font-size: 15.4px; line-height: 64px; }
.status { position: absolute; left: 0; bottom: 0; width: 248px; height: 21px; background: #0a3a5b; border-radius: 0 4px 0 0; padding-left: 6px; font-size: 12px; line-height: 21px; text-align: left; }

.taskbar {
  height: 48px; flex: none; display: flex; align-items: center; border-top: 1px solid #b4b8c0; padding-bottom: 1px; color: #222; font-size: 11.6px;
  background: linear-gradient(90deg, #d8dcea 0, #d9dbe8 250px, #d6deea 390px, #dcdbe4 450px, #ecd3d8 520px, #dfdae0 590px, #d4dde9 670px, #d6dfe9 1050px, #d8dae5 1250px, #d3dfe7 1500px, #cbe4ea 1640px, #d9dade 1710px, #dadadf 1920px);
}
.weather { width: 376px; padding-left: 21px; display: flex; gap: 3px; align-items: center; }
.weather svg { margin-top: -4px; }
.weather-text { display: flex; flex-direction: column; align-items: flex-start; line-height: 16px; }
.muted { color: #5c5e66; }
.start { margin-left: 21px; }
.search {
  width: 218px; height: 31px; margin-left: 12px; border-radius: 15.5px; border: 1px solid #c9ccd4; border-bottom-color: #a9adb5;
  background: linear-gradient(90deg, #f3f4f8, #f8f1f3 40%, #f3f4f7); display: flex; align-items: center; padding: 0 1px 0 10px; font-size: 13.5px; color: #5c5c60;
}
.search > .fit { margin-left: 9px; line-height: 28px; }
.scene { margin-left: auto; }
.apps { display: flex; margin-left: 4px; }
.app { width: 38px; height: 38px; margin: 0 3px; display: grid; place-items: center; position: relative; border-radius: 4px; }
.app.open::after, .app.active::after { content: ""; position: absolute; bottom: 0; left: 16px; width: 6px; height: 3px; border-radius: 2px; background: #7d8085; }
.app.active { background: #eef0f5; box-shadow: 0 0 1px #aaa; }
.app.active::after { left: 11px; width: 16px; background: #0067c0; }
.profile { position: absolute; right: 2px; top: 2px; width: 16px; height: 16px; border-radius: 50%; background: #512da8; color: #fff; font: 9.5px/16px Roboto, sans-serif; text-align: center; }
.tray { margin-left: auto; display: flex; align-items: center; padding-right: 20px; line-height: 16px; }
.onedrive { margin-left: 17px; }
.lang { width: 24px; margin-left: 17px; display: flex; flex-direction: column; align-items: center; }
.net { margin-left: 18px; }
.vol { margin-left: 7px; }
.clock { margin-left: 17px; display: flex; flex-direction: column; align-items: flex-end; width: 55px; }
.bell { margin-left: 9px; }
</style>
